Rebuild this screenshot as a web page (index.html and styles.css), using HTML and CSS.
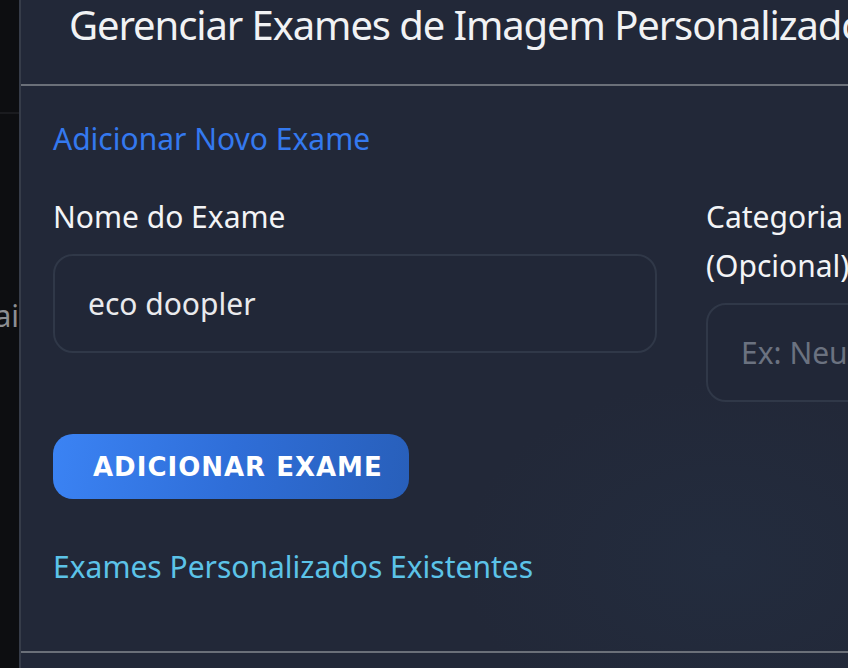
FILE: index.html
```html
<!DOCTYPE html>
<html lang="pt-BR">
<head>
<meta charset="utf-8">
<title>Gerenciar Exames de Imagem Personalizados</title>
<link rel="stylesheet" href="styles.css">
</head>
<body>
<div class="page">
  <aside class="backdrop">
    <div class="backdrop-bar"></div>
    <div class="backdrop-text">Especiai</div>
  </aside>
  <section class="modal">
    <header class="modal-header">
      <h2 class="modal-title">Gerenciar Exames de Imagem Personalizados</h2>
    </header>
    <div class="modal-body">
      <h3 class="section-title add">Adicionar Novo Exame</h3>
      <div class="form-grid">
        <div class="field">
          <label class="field-label" for="nome">Nome do Exame</label>
          <input class="field-input" id="nome" type="text" value="eco doopler">
        </div>
        <div class="field narrow">
          <label class="field-label" for="cat">Categoria (Opcional)</label>
          <input class="field-input" id="cat" type="text" placeholder="Ex: Neurologia">
        </div>
      </div>
      <button class="btn-add" type="button">ADICIONAR EXAME</button>
      <h3 class="section-title existing">Exames Personalizados Existentes</h3>
    </div>
    <div class="modal-footer"></div>
  </section>
</div>
</body>
</html>
```

FILE: styles.css
```css
html, body {
  margin: 0;
  padding: 0;
  height: 100%;
  overflow: hidden;
  background: #0d0e11;
}

body {
  font-family: "Noto Sans", "Open Sans", sans-serif;
}

.page {
  display: flex;
  height: 668px;
  width: 1400px;
}

.backdrop {
  width: 19px;
  flex: none;
  background: #0d0e11;
  overflow: hidden;
}

.backdrop-bar {
  height: 112px;
  border-bottom: 2px solid #1a1b1f;
}

.backdrop-text {
  margin-top: 181px;
  font-size: 30px;
  color: #8c8e92;
  white-space: nowrap;
  direction: rtl;
  text-align: right;
  width: 19px;
}

.modal {
  flex: none;
  width: 1200px;
  border-left: 2px solid #363c49;
  background: radial-gradient(ellipse 260px 180px at 700px 560px, #232c3e 0%, #222838 100%);
  background-color: #222838;
  display: flex;
  flex-direction: column;
}

.modal-header {
  height: 86px;
  padding: 1px 48px 0;
  box-sizing: border-box;
  border-bottom: 2px solid #6b7079;
}

.modal-title {
  margin: 0;
  font-size: 40px;
  line-height: 48px;
  font-weight: 400;
  letter-spacing: -1.1px;
  color: #f1f2f4;
  white-space: nowrap;
}

.modal-body {
  padding: 33px 32px 0;
  height: 567px;
  box-sizing: border-box;
  border-bottom: 2px solid #6b7079;
}

.section-title {
  margin: 0;
  font-weight: 400;
  font-size: 30px;
  line-height: 40px;
}

.section-title.add {
  color: #3479ef;
}

.section-title.existing {
  color: #5cc3e8;
  margin-top: 48px;
}

.form-grid {
  display: grid;
  grid-template-columns: 604px 220px;
  column-gap: 49px;
  margin-top: 33px;
}

.field {
  display: flex;
  flex-direction: column;
}

.field.narrow {
  width: 220px;
}

.field-label {
  font-size: 30px;
  line-height: 49px;
  color: #f3f4f6;
  margin-bottom: 13px;
}

.field-input {
  width: 604px;
  height: 99px;
  box-sizing: border-box;
  border: 2px solid #303848;
  border-radius: 20px;
  background: #212737;
  color: #e9eaed;
  font-family: inherit;
  font-size: 30px;
  padding: 0 33px;
  outline: none;
}

.field-input::placeholder {
  color: #6b7280;
}

.btn-add {
  margin-top: 32px;
  height: 65px;
  padding: 0 26px 0 40px;
  border: none;
  border-radius: 20px;
  background: linear-gradient(100deg, #3b83f4 0%, #2f6ed8 50%, #285fba 100%);
  color: #ffffff;
  font-family: "DejaVu Sans", "Noto Sans", sans-serif;
  font-weight: 700;
  font-size: 26px;
  letter-spacing: 1px;
  cursor: pointer;
}

.modal-footer {
  flex: 1;
}
```
